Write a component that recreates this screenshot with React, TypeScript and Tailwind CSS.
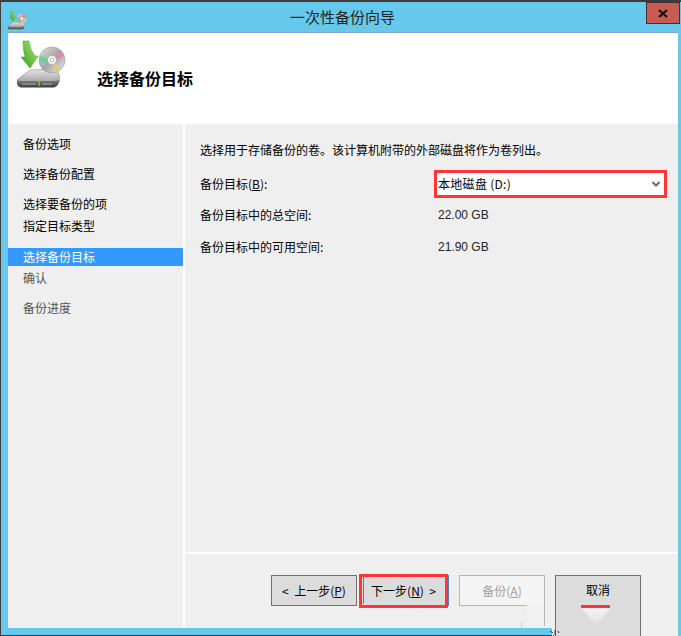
import React from "react";

const DiskIcon = ({ width, height }: { width: number; height: number }) => (
  <svg width={width} height={height} viewBox="0 0 60 56">
    <defs>
      <linearGradient id="top" x1="0" y1="0" x2="0" y2="1">
        <stop offset="0" stopColor="#e6e6e6" />
        <stop offset="1" stopColor="#a0a0a0" />
      </linearGradient>
      <linearGradient id="front" x1="0" y1="0" x2="0" y2="1">
        <stop offset="0" stopColor="#8c8c8c" />
        <stop offset="1" stopColor="#3c3c3c" />
      </linearGradient>
      <linearGradient id="arrow" x1="1" y1="0" x2="0" y2="1">
        <stop offset="0" stopColor="#b5e86f" />
        <stop offset="1" stopColor="#2f9e22" />
      </linearGradient>
      <linearGradient id="cd" x1="0" y1="0" x2="1" y2="1">
        <stop offset="0" stopColor="#e2e2e2" />
        <stop offset="0.5" stopColor="#a4a4a4" />
        <stop offset="1" stopColor="#ececec" />
      </linearGradient>
    </defs>
    <path d="M8 43 L20 34 L47 33 L50 42 L44 47 L10 47 Z" fill="url(#top)" stroke="#777" strokeWidth="0.5" />
    <path d="M7 43 Q6 51 11 51.5 L44 51.5 Q49 50 50 43 Q48 45 44 45 L12 45 Q8 45.500 7 43 Z" fill="url(#front)" />
    <path d="M12 48 L26 48 M32 48 L42 48" stroke="#b0b0b0" strokeWidth="1" />
    <rect x="28" y="45" width="2" height="5" fill="#4fc832" />
    <circle cx="42" cy="24" r="13" fill="url(#cd)" stroke="#8f8f8f" strokeWidth="0.5" />
    <path d="M30 20 L39 23 L39 26 L29 27 Z" fill="#6fcf9a" />
    <path d="M52 15 L44 22 L46 24 L54 20 Z" fill="#d98ab0" />
    <path d="M50 34 L44 26 L42 28 L46 36 Z" fill="#d8d070" />
    <circle cx="42" cy="24" r="4.5" fill="#f2f2f2" stroke="#9a9a9a" strokeWidth="0.5" />
    <circle cx="42" cy="24" r="1.8" fill="#ffffff" stroke="#777" strokeWidth="0.5" />
    <path d="M13 5 L19 5 Q20 14 25 20 L28 20 L20 32 L11 21 L15 21 Q13 14 13 5 Z" fill="url(#arrow)" stroke="#3a9a2a" strokeWidth="0.5" />
  </svg>
);

const WizardButton = ({ children, className = "" }: { children: React.ReactNode; className?: string }) => (
  <div className={`w-[86px] flex justify-center text-[12px] leading-none border ${className}`}>{children}</div>
);

export default function App() {
  return (
    <div
      className="relative w-[681px] h-[636px] overflow-hidden flex flex-col bg-[#66c9ec] border-t-2 border-l border-[#3c3c3c] text-black"
      style={{ fontFamily: '"Noto Sans CJK SC", "Liberation Sans", sans-serif' }}
    >
      {/* title bar */}
      <div className="h-[30px] flex items-center shrink-0">
        <div className="ml-[4px] mt-[5px]">
          <DiskIcon width={24} height={22} />
        </div>
        <div className="flex-1 text-center text-[15px] text-[#222] pl-[10px] pt-[1px]">一次性备份向导</div>
        <div className="w-[34px] h-[22px] mr-[1px] -mt-[8px] bg-[#c75c52] border border-[#44302e] flex items-center justify-center">
          <svg width="10" height="9" viewBox="0 0 10 9">
            <path d="M1 1 L9 8 M9 1 L1 8" stroke="#111" strokeWidth="2.2" />
          </svg>
        </div>
      </div>

      <div className="flex-1 min-h-0 flex flex-col ml-[7px] mr-[3px] border-t border-[#7ba6c8]">
        {/* header */}
        <div className="h-[90px] shrink-0 bg-white flex items-start pl-[2px] pt-[3px]">
          <DiskIcon width={60} height={56} />
          <div className="ml-[27px] mt-[31px] text-[16px] font-bold leading-[22px]">选择备份目标</div>
        </div>

        <div className="flex-1 min-h-0 flex bg-white pt-px">
          {/* steps */}
          <div className="w-[175px] shrink-0 bg-[#efefef] flex flex-col pt-[11px] text-[12px] leading-[18px]">
            <div className="pl-[15px] mb-[12px]">备份选项</div>
            <div className="pl-[15px] mb-[12px]">选择备份配置</div>
            <div className="pl-[15px] mb-[4px]">选择要备份的项</div>
            <div className="pl-[15px] mb-[13px]">指定目标类型</div>
            <div className="pl-[15px] mb-[3px] h-[18px] leading-[17px] bg-[#3399ff] text-white">选择备份目标</div>
            <div className="pl-[15px] mb-[12px] text-[#555]">确认</div>
            <div className="pl-[15px] text-[#555]">备份进度</div>
          </div>

          {/* main panel */}
          <div className="ml-[2px] flex-1 bg-[#efefef] flex flex-col">
            <div className="h-[430px] shrink-0 border-b-2 border-white pl-[15px] pt-[17px] text-[12px] leading-[18px]">
              <div>选择用于存储备份的卷。该计算机附带的外部磁盘将作为卷列出。</div>
              <div className="flex items-center mt-[11px] h-[27px]">
                <div className="w-[234px]">
                  备份目标(<span className="underline">B</span>):
                </div>
                <div className="w-[233px] h-[28px] bg-white border-[3px] border-[#ff3636] flex items-center justify-between pl-[1px] pr-[4px]">
                  <span className="tracking-[0.3px]">本地磁盘 (D:)</span>
                  <svg width="8" height="6" viewBox="0 0 8 6">
                    <path d="M0.5 1 L4 4.5 L7.5 1" fill="none" stroke="#6a6a6a" strokeWidth="2" />
                  </svg>
                </div>
              </div>
              <div className="flex mt-[9px]">
                <div className="w-[238px]">备份目标中的总空间:</div>
                <div className="font-['Liberation_Sans'] text-[#222]">22.00 GB</div>
              </div>
              <div className="flex mt-[14px]">
                <div className="w-[238px]">备份目标中的可用空间:</div>
                <div className="font-['Liberation_Sans'] text-[#222]">21.90 GB</div>
              </div>
            </div>

            {/* footer buttons */}
            <div className="flex-1 flex items-start pl-[86px] pt-[21px]">
              <WizardButton className="h-[31px] items-center bg-[#dcdcdc] border-[#707070]">
                &lt;&nbsp;&nbsp;上一步(<span className="underline">P</span>)
              </WizardButton>
              <div className="ml-[2px] -mt-[1px] w-[89px] h-[34px] border-[3px] border-[#ff3636] bg-[#dcdcdc] flex items-center justify-center text-[12px]">
                下一步(<span className="underline">N</span>)&nbsp;&nbsp;&gt;
              </div>
              <div className="w-px h-[31px] bg-[#4a86b8]" />
              <WizardButton className="ml-[10px] h-[31px] items-center bg-[#f4f4f4] border-[#b4b4b4] text-[#a0a0a0]">
                备份(<span className="underline">A</span>)
              </WizardButton>
              <WizardButton className="ml-[10px] h-[70px] pt-[8px] bg-[#dcdcdc] border-[#707070]">取消</WizardButton>
            </div>
          </div>
        </div>
      </div>

      {/* cropped bottom edge of the window, over the buttons */}
      <div className="absolute left-0 bottom-0 w-[551px] h-[8px] bg-[#66c9ec] border-b border-[#3c3c3c]" />
      {/* blue edge just inside the red box on the next button */}
      <div className="absolute left-[362px] top-[574px] w-px h-[28px] bg-[#4a86b8]" />
      {/* leftovers of an erased mark over the backup button */}
      <div className="absolute left-[526px] top-[602px] w-[17px] h-[24px] bg-[#f1f1f1]" />
      <div className="absolute left-[543px] top-[602px] w-px h-[22px] bg-[#b4b4b4]" />
      <div className="absolute left-[520px] top-[620px] w-px h-[6px] bg-[#d0d0d0]" />
      {/* red mark and white smudge on the cancel button */}
      <div className="absolute left-[580px] top-[603px] w-[29px] h-[3px] bg-[#ff3636]" />
      <div className="absolute left-[580px] top-[606px] w-[30px] h-[16px] blur-[1px] bg-gradient-to-b from-[#f2f2f2] to-[#e4e4e4] [clip-path:polygon(0_0,100%_0,50%_100%)]" />
      {/* stray glyph at the end of the bottom edge */}
      <svg className="absolute left-[549px] top-[628px]" width="10" height="6" viewBox="0 0 10 6">
        <path d="M0 1 L3 3 M5 0 L5 5 M8 1 L9 3 M3 5 L4 6" fill="none" stroke="#333" strokeWidth="1" />
      </svg>
    </div>
  );
}
